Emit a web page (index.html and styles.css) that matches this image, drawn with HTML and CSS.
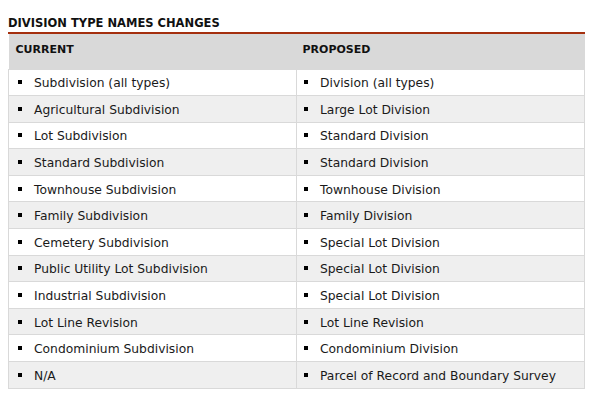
FILE: index.html
```html
<!DOCTYPE html>
<html>
<head>
<meta charset="utf-8">
<link rel="stylesheet" href="styles.css">
</head>
<body>
<div class="page">
  <h1 class="title">DIVISION TYPE NAMES CHANGES</h1>
  <table class="tbl">
    <thead>
      <tr><th>CURRENT</th><th>PROPOSED</th></tr>
    </thead>
    <tbody>
      <tr><td><span class="b"></span>Subdivision (all types)</td><td><span class="b"></span>Division (all types)</td></tr>
      <tr><td><span class="b"></span>Agricultural Subdivision</td><td><span class="b"></span>Large Lot Division</td></tr>
      <tr><td><span class="b"></span>Lot Subdivision</td><td><span class="b"></span>Standard Division</td></tr>
      <tr><td><span class="b"></span>Standard Subdivision</td><td><span class="b"></span>Standard Division</td></tr>
      <tr><td><span class="b"></span>Townhouse Subdivision</td><td><span class="b"></span>Townhouse Division</td></tr>
      <tr><td><span class="b"></span>Family Subdivision</td><td><span class="b"></span>Family Division</td></tr>
      <tr><td><span class="b"></span>Cemetery Subdivision</td><td><span class="b"></span>Special Lot Division</td></tr>
      <tr><td><span class="b"></span>Public Utility Lot Subdivision</td><td><span class="b"></span>Special Lot Division</td></tr>
      <tr><td><span class="b"></span>Industrial Subdivision</td><td><span class="b"></span>Special Lot Division</td></tr>
      <tr><td><span class="b"></span>Lot Line Revision</td><td><span class="b"></span>Lot Line Revision</td></tr>
      <tr><td><span class="b"></span>Condominium Subdivision</td><td><span class="b"></span>Condominium Division</td></tr>
      <tr><td><span class="b"></span>N/A</td><td><span class="b"></span>Parcel of Record and Boundary Survey</td></tr>
    </tbody>
  </table>
</div>
</body>
</html>
```
FILE: styles.css
```css
html, body { margin: 0; padding: 0; background: #fff; }
body { font-family: "DejaVu Sans", sans-serif; color: #1a1a1a; }
.page { padding: 15px 7px 0 8px; }
.title {
  margin: 0;
  font-size: 11.5px;
  font-weight: bold;
  letter-spacing: 0;
  line-height: 16px;
  padding-bottom: 1px;
  border-bottom: 2px solid #a5300f;
  color: #111;
}
.tbl {
  width: 577px;
  border-collapse: collapse;
  table-layout: fixed;
}
.tbl th {
  background: #d9d9d9;
  text-align: left;
  font-size: 11px;
  font-weight: bold;
  height: 35px;
  padding: 0 0 4px 7px;
  box-sizing: border-box;
  vertical-align: middle;
  color: #111;
}
.tbl th + th { padding-left: 6px; }
.tbl td {
  font-size: 12.3px;
  height: 26.6px;
  padding: 2px 0 0 9px;
  box-sizing: border-box;
  border: 1px solid #d9d9d9;
  vertical-align: middle;
  white-space: nowrap;
}
.tbl td + td { padding-left: 7px; }
.tbl tbody tr:nth-child(even) td { background: #efefef; }
.b {
  display: inline-block;
  width: 4px;
  height: 4px;
  background: #000;
  vertical-align: 3px;
  margin-right: 12px;
}
```
